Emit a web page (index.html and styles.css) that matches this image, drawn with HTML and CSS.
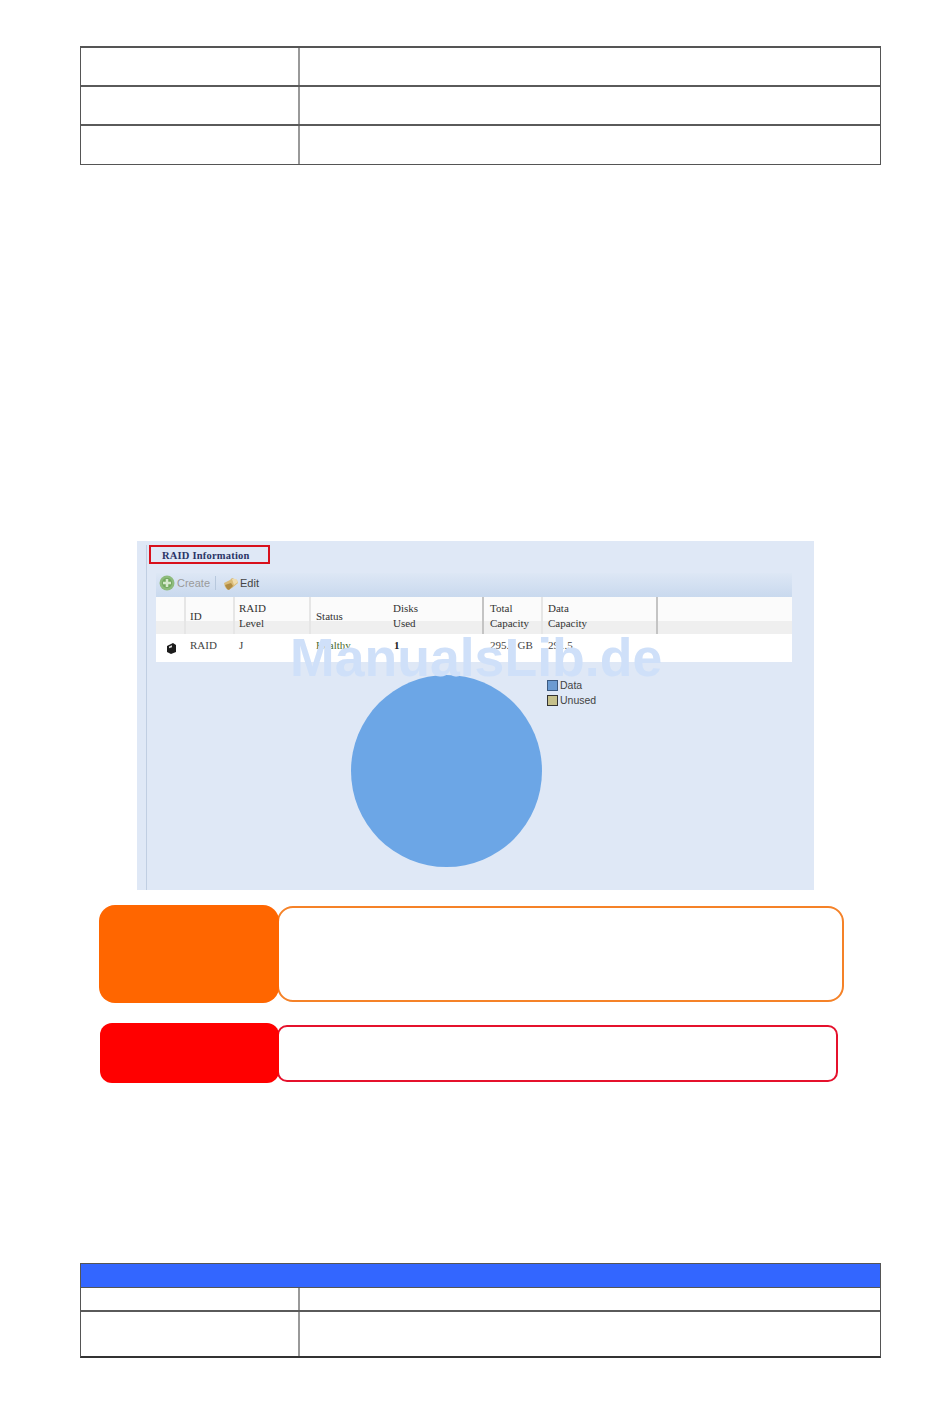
FILE: index.html
```html
<!DOCTYPE html>
<html lang="en">

<head>
  <meta charset="UTF-8">
  <meta name="viewport" content="width=device-width, initial-scale=1.0">
  <title>RAID Information</title>
  <link rel="stylesheet" href="styles.css">
</head>

<body>
  <div class="page">
    <div class="doc-table top-table">
      <div class="doc-row"><div class="doc-cell"></div><div class="doc-cell"></div></div>
      <div class="doc-row"><div class="doc-cell"></div><div class="doc-cell"></div></div>
      <div class="doc-row"><div class="doc-cell"></div><div class="doc-cell"></div></div>
    </div>

    <div class="shot">
      <div class="shot-inner">
        <div class="title-box">RAID Information</div>
        <div class="panel">
          <div class="toolbar">
            <svg class="tool-icon" viewBox="0 0 16 16">
              <circle cx="8" cy="8" r="7.500" fill="#8dbb7c" />
              <circle cx="8" cy="8" r="5" fill="#72a85f" />
              <path d="M8 4v8M4 8h8" stroke="#d5e8cc" stroke-width="2.500" />
            </svg>
            <span class="tool-off">Create</span>
            <span class="tool-sep"></span>
            <svg class="tool-icon" viewBox="0 0 16 16">
              <path d="M1 8l6-3 2-2 5 2 1 3-6 5-4 2-3-3z" fill="#d9bb78" />
              <path d="M2 10l6-2 2 3-4 4-2-1z" fill="#b08c44" />
              <path d="M9 4l4 0 2 3-4 3z" fill="#efdcae" />
            </svg>
            <span class="tool-on">Edit</span>
          </div>
          <div class="grid-head">
            <div class="head-cell"></div>
            <div class="head-cell">ID</div>
            <div class="head-cell">RAID<br>Level</div>
            <div class="head-cell no-line">Status</div>
            <div class="head-cell dark-line">Disks<br>Used</div>
            <div class="head-cell">Total<br>Capacity</div>
            <div class="head-cell dark-line">Data<br>Capacity</div>
            <div class="head-cell no-line"></div>
          </div>
          <div class="grid-row">
            <div class="row-cell">
              <svg class="disk-icon" viewBox="0 0 10 11">
                <path d="M1 3l6-3 3 2v7l-5 2-4-2z" fill="#1c1c1c" />
                <path d="M3 3.500l3-1.200v2l-3 1z" fill="#d8d8d8" />
              </svg>
            </div>
            <div class="row-cell">RAID</div>
            <div class="row-cell">J</div>
            <div class="row-cell status">Healthy</div>
            <div class="row-cell strong">1</div>
            <div class="row-cell">295.5 GB</div>
            <div class="row-cell">291.5</div>
            <div class="row-cell"></div>
          </div>
          <div class="chart">
            <div class="pie"></div>
            <div class="legend">
              <div class="legend-item"><span class="swatch swatch-data"></span>Data</div>
              <div class="legend-item"><span class="swatch swatch-unused"></span>Unused</div>
            </div>
          </div>
        </div>
      </div>
      <div class="watermark">ManualsLib.de</div>
    </div>

    <div class="note note-orange">
      <div class="note-label"></div>
      <div class="note-box"></div>
    </div>
    <div class="note note-red">
      <div class="note-label"></div>
      <div class="note-box"></div>
    </div>

    <div class="doc-table bottom-table">
      <div class="doc-head"></div>
      <div class="doc-row short"><div class="doc-cell"></div><div class="doc-cell"></div></div>
      <div class="doc-row tall"><div class="doc-cell"></div><div class="doc-cell"></div></div>
    </div>
  </div>
</body>

</html>
```

FILE: styles.css
```css
* {
  margin: 0;
  padding: 0;
  box-sizing: border-box;
}

body {
  background: #fff;
  font-family: "Liberation Serif", serif;
}

.page {
  width: 950px;
  height: 1420px;
  padding: 46px 0 0 80px;
  overflow: hidden;
}

/* document tables */
.doc-table {
  width: 801px;
  border: 1px solid #555;
  border-top-width: 2px;
}

.doc-row {
  display: grid;
  grid-template-columns: 219px 1fr;
  height: 39px;
  border-bottom: 2px solid #5a5a5a;
}

.doc-row:last-child {
  border-bottom: 0;
}

.doc-cell:first-child {
  border-right: 2px solid #999;
}

.top-table .doc-row:last-child {
  height: 38px;
}

.bottom-table {
  margin-top: 180px;
  border-top-width: 1px;
  border-bottom: 2px solid #333;
}

.doc-head {
  height: 24px;
  background: #3366ff;
  border-bottom: 1px solid #555;
}

.doc-row.short {
  height: 24px;
}

.doc-row.tall {
  height: 44px;
}

/* screenshot of the RAID page */
.shot {
  position: relative;
  width: 677px;
  height: 349px;
  margin: 376px 0 0 57px;
  padding: 4px 0 0 9px;
  background: #dfe8f6;
}

.shot-inner {
  height: 100%;
  padding-left: 2px;
  border-left: 1px solid #c0cee2;
}

.title-box {
  width: 121px;
  height: 19px;
  padding-left: 11px;
  border: 2px solid #d8101c;
  color: #2a3566;
  font-size: 10.5px;
  font-weight: bold;
  letter-spacing: 0.2px;
  line-height: 18px;
}

.panel {
  width: 636px;
  margin: 9px 0 0 7px;
}

.toolbar {
  display: flex;
  align-items: center;
  height: 24px;
  padding: 0 0 4px 3px;
  background: linear-gradient(#dde7f5, #c9d9ee);
  font-family: "Liberation Sans", sans-serif;
  font-size: 11px;
}

.tool-icon {
  width: 16px;
  height: 16px;
}

.tool-off {
  margin-left: 2px;
  color: #9a9a9a;
}

.tool-sep {
  width: 1px;
  height: 14px;
  margin: 0 7px 0 5px;
  background: #b7c8dd;
}

.tool-on {
  margin-left: 1px;
  color: #444;
}

.grid-head,
.grid-row {
  display: grid;
  grid-template-columns: 30px 49px 76px 79px 94px 59px 115px 134px;
}

.grid-head {
  height: 37px;
  background: linear-gradient(#fbfbfb 65%, #efefef 65%);
}

.head-cell {
  display: flex;
  align-items: flex-end;
  padding: 0 0 3px 4px;
  border-right: 2px solid #e6e6e6;
  color: #333;
  font-size: 11px;
  line-height: 15px;
}

.head-cell:nth-child(2),
.head-cell:nth-child(4) {
  padding-bottom: 10px;
}

.head-cell:nth-child(4),
.head-cell:nth-child(7) {
  padding-left: 5px;
}

.head-cell:nth-child(5) {
  padding-left: 3px;
}

.head-cell:nth-child(6) {
  padding-left: 6px;
}

.head-cell.no-line {
  border-right: 0;
}

.head-cell.dark-line {
  border-right-color: #c4c4c4;
}

.grid-row {
  height: 28px;
  background: #fff;
}

.row-cell {
  padding: 4px 0 0 4px;
  color: #444;
  font-size: 11px;
  line-height: 15px;
}

.row-cell:nth-child(7) {
  padding-left: 5px;
}

.row-cell:nth-child(6) {
  padding-left: 6px;
}

.status {
  padding-left: 5px;
  color: #4a6a30;
}

.strong {
  font-weight: bold;
  color: #222;
}

.disk-icon {
  display: block;
  width: 10px;
  height: 11px;
  margin: 5px 0 0 6px;
}

.chart {
  display: flex;
  align-items: flex-start;
  padding: 13px 0 0 195px;
}

.pie {
  width: 191px;
  height: 192px;
  border-radius: 50%;
  background: #6ca6e6;
}

.legend {
  margin: 3px 0 0 5px;
  color: #444;
  font-family: "Liberation Sans", sans-serif;
  font-size: 10.5px;
  line-height: 15px;
}

.legend-item {
  display: flex;
  align-items: center;
}

.swatch {
  width: 11px;
  height: 11px;
  margin-right: 2px;
  border: 1px solid #333;
}

.swatch-data {
  background: #6b9bd2;
  border-color: #3c5a80;
}

.swatch-unused {
  background: #c6c08a;
}

.watermark {
  position: absolute;
  left: 153px;
  top: 86px;
  color: #cfe0f9;
  font-family: "Liberation Sans", sans-serif;
  font-size: 53.6px;
  font-weight: bold;
  line-height: 60px;
  white-space: nowrap;
}

/* orange and red callouts */
.note {
  display: flex;
  align-items: center;
}

.note-label {
  position: relative;
  z-index: 1;
  flex: none;
  width: 180px;
}

.note-box {
  flex: none;
  margin-left: -2px;
  border: 2px solid;
  background: #fff;
}

.note-orange {
  margin: 15px 0 0 19px;
}

.note-orange .note-label {
  height: 98px;
  border-radius: 16px;
  background: #ff6600;
}

.note-orange .note-box {
  width: 567px;
  height: 96px;
  border-color: #f58228;
  border-radius: 16px;
}

.note-red {
  margin: 20px 0 0 20px;
}

.note-red .note-label {
  width: 179px;
  height: 60px;
  border-radius: 12px;
  background: #ff0000;
}

.note-red .note-box {
  width: 561px;
  height: 57px;
  border-color: #e5112c;
  border-radius: 10px;
}
```
